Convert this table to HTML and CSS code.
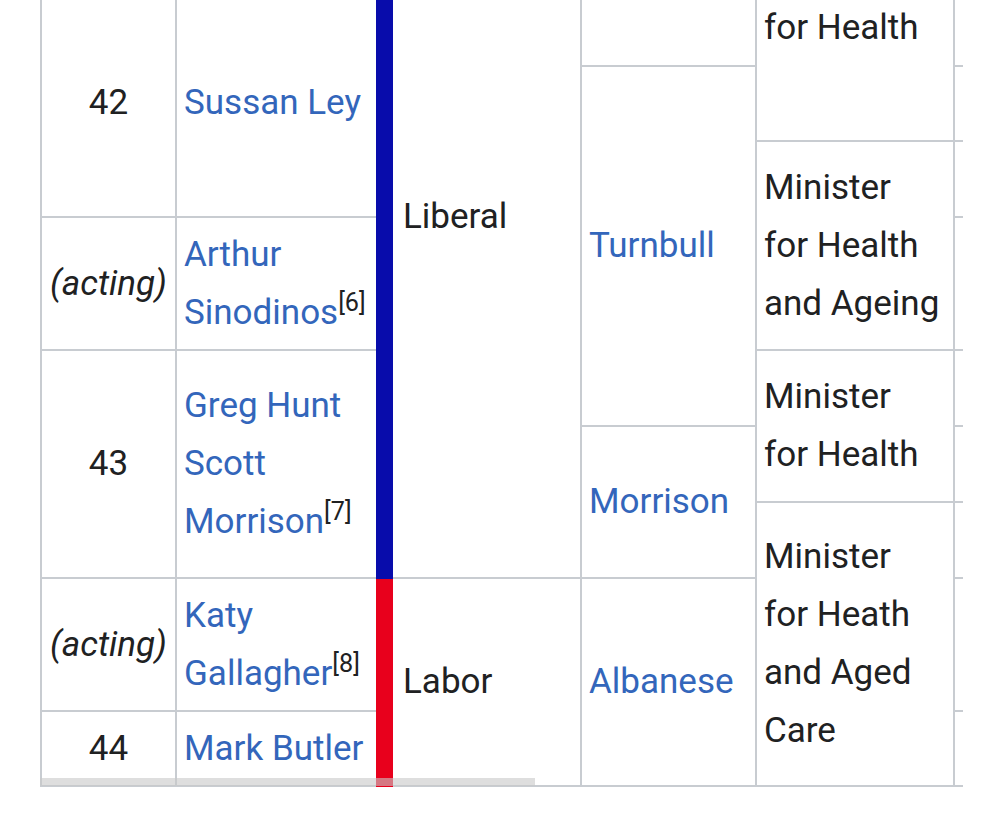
FILE: index.html
```html
<!DOCTYPE html>
<html lang="en">
<head>
<meta charset="utf-8">
<title>Ministers for Health</title>
<link rel="stylesheet" href="styles.css">
</head>
<body>
<div class="scroller">
  <div class="table">
    <div class="cell num"></div>
    <div class="cell name"></div>
    <div class="bar liberal span8"></div>
    <div class="cell party span8"><div class="in">Liberal</div></div>
    <div class="cell pm span2"></div>
    <div class="cell title span3"><div class="in">Minister<br>for Health</div></div>
    <div class="cell extra"></div>

    <div class="cell num span3"><div class="in">42</div></div>
    <div class="cell name span3"><div class="in"><a href="#">Sussan Ley</a></div></div>
    <div class="cell extra"></div>

    <div class="cell pm span4"><div class="in"><a href="#">Turnbull</a></div></div>
    <div class="cell extra"></div>

    <div class="cell title span2"><div class="in">Minister<br>for Health<br>and Ageing</div></div>
    <div class="cell extra"></div>

    <div class="cell num"><div class="in"><i>(acting)</i></div></div>
    <div class="cell name"><div class="in"><a href="#">Arthur</a> <span class="nw"><a href="#">Sinodinos</a><sup>[6]</sup></span></div></div>
    <div class="cell extra"></div>

    <div class="cell num span3"><div class="in">43</div></div>
    <div class="cell name span3"><div class="in"><a href="#">Greg Hunt</a><br><a href="#">Scott</a> <span class="nw"><a href="#">Morrison</a><sup>[7]</sup></span></div></div>
    <div class="cell title span2"><div class="in">Minister<br>for Health</div></div>
    <div class="cell extra"></div>

    <div class="cell pm span2"><div class="in"><a href="#">Morrison</a></div></div>
    <div class="cell extra"></div>

    <div class="cell title span3"><div class="in">Minister<br>for Heath<br>and Aged<br>Care</div></div>
    <div class="cell extra"></div>

    <div class="cell num"><div class="in"><i>(acting)</i></div></div>
    <div class="cell name"><div class="in"><a href="#">Katy</a> <span class="nw"><a href="#">Gallagher</a><sup>[8]</sup></span></div></div>
    <div class="bar labor span2"></div>
    <div class="cell party span2"><div class="in">Labor</div></div>
    <div class="cell pm span2"><div class="in"><a href="#">Albanese</a></div></div>
    <div class="cell extra"></div>

    <div class="cell num"><div class="in">44</div></div>
    <div class="cell name"><div class="in"><a href="#">Mark Butler</a></div></div>
    <div class="cell extra"></div>
  </div>
  <div class="scrollbar"></div>
</div>
</body>
</html>
```

FILE: styles.css
```css
* {
  box-sizing: border-box;
}

html, body {
  margin: 0;
  padding: 0;
  background: #ffffff;
}

body {
  font-family: Roboto, "Noto Sans", "Liberation Sans", sans-serif;
  color: #202122;
}

.scroller {
  position: relative;
  margin: -143px 0 0 40px;
  width: 923px;
  overflow: hidden;
}

.table {
  display: grid;
  grid-template-columns: 135px 199px 17px 189px 175px 198px 200px;
  grid-template-rows: 133px 77px 75px 76px 133px 76px 76px 76px 133px 75px;
  width: max-content;
  border-left: 2px solid #c8ccd1;
  font-size: 35px;
  line-height: 58px;
}

.cell {
  display: flex;
  align-items: center;
  padding: 0 7px;
  border-right: 2px solid #c8ccd1;
  border-bottom: 2px solid #c8ccd1;
  background: #ffffff;
}

.name {
  border-right: none;
}

.party {
  padding: 0 10px;
}

.num {
  justify-content: center;
  text-align: center;
}

.in {
  min-width: 0;
}

.nw {
  white-space: nowrap;
}

.span2 { grid-row: span 2; }
.span3 { grid-row: span 3; }
.span4 { grid-row: span 4; }
.span8 { grid-row: span 8; }

.liberal {
  background: #080cab;
}

.labor {
  background: #e8001c;
}

a {
  color: #3366bb;
  text-decoration: none;
}

sup {
  font-size: 72%;
  line-height: 1;
  vertical-align: super;
}

.scrollbar {
  position: absolute;
  left: 0;
  bottom: 1px;
  width: 495px;
  height: 8px;
  background: rgba(200, 200, 200, 0.6);
}
```
